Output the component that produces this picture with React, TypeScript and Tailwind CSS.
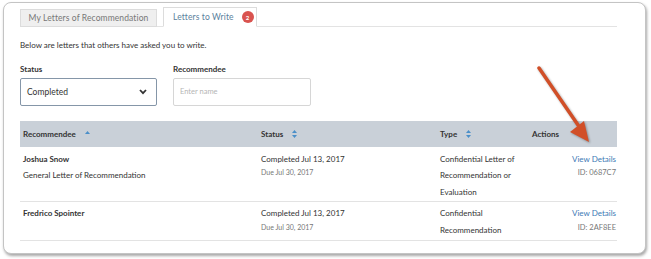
import React from "react";

const font = { fontFamily: "Lato, 'Open Sans', sans-serif" };

function SortBoth() {
  return (
    <svg width="5" height="8" viewBox="0 0 5 8" className="ml-[9px]">
      <polygon points="2.5,0 5,3 0,3" fill="#4a8fc9" />
      <polygon points="2.5,8 5,5 0,5" fill="#4a8fc9" />
    </svg>
  );
}

function SortUp() {
  return (
    <svg width="5" height="4" viewBox="0 0 5 4" className="ml-[9px] mb-[3px]">
      <polygon points="2.5,0 5,3 0,3" fill="#4a8fc9" />
    </svg>
  );
}

export default function App() {
  return (
    <div className="w-[651px] h-[259px] bg-white pt-[2px] pl-[3px] text-[#333]" style={font}>
      <div className="relative w-[643px] h-[252px] rounded-[8px] border border-[#c4c4c4] bg-white shadow-[1px_2px_3px_rgba(0,0,0,0.35)] pl-[16px] pt-[5px]">
        {/* tabs */}
        <div className="flex items-end gap-[6px] w-[597px] h-[19px] border-b border-[#e3e3e3]">
          <div className="h-[18px] w-[137px] -mb-px bg-[#efefef] border border-[#dcdcdc] flex items-center justify-center text-[8.5px] text-[#777] tracking-[0.1px]">
            My Letters of Recommendation
          </div>
          <div className="h-[20px] w-[94px] -mb-px bg-white border border-[#dcdcdc] border-b-white flex items-center pl-[9px] text-[8.5px] text-[#5b7f9d] tracking-[0.1px]">
            Letters to Write
            <span className="ml-[8px] w-[12px] h-[12px] rounded-full bg-[#d9534f] text-white text-[6px] font-bold flex items-center justify-center">
              2
            </span>
          </div>
        </div>

        <p className="mt-[12px] text-[8px] leading-[12px] text-[#333]">
          Below are letters that others have asked you to write.
        </p>

        {/* filters */}
        <div className="mt-[13px] flex gap-[16px]">
          <div className="flex flex-col">
            <span className="text-[8px] font-bold leading-[11px] text-[#333]">Status</span>
            <div className="mt-[3px] w-[137px] h-[28px] border border-[#8596a8] rounded-[2px] flex items-center justify-between pl-[6px] pr-[9px] text-[8.5px] text-[#333]">
              Completed
              <svg width="8" height="6" viewBox="0 0 8 6">
                <path d="M1 1 L4 4.2 L7 1" stroke="#333" strokeWidth="1.8" fill="none" />
              </svg>
            </div>
          </div>
          <div className="flex flex-col">
            <span className="text-[8px] font-bold leading-[11px] text-[#333]">Recommendee</span>
            <div className="mt-[3px] w-[138px] h-[28px] border border-[#d6d6d6] rounded-[2px] flex items-center pl-[6px] text-[7.5px] text-[#b5b5b5]">
              Enter name
            </div>
          </div>
        </div>

        {/* table */}
        <div className="mt-[15px] w-[597px] text-[8px]">
          <div className="grid grid-cols-[238px_179px_92px_1fr] h-[26px] bg-[#c9d0d8] items-center font-bold text-[#333]">
            <div className="pl-[3px] flex items-center">Recommendee<SortUp /></div>
            <div className="pl-[3px] flex items-center">Status<SortBoth /></div>
            <div className="pl-[3px] flex items-center">Type<SortBoth /></div>
            <div className="pl-[3px]">Actions</div>
          </div>

          <div className="grid grid-cols-[238px_179px_92px_1fr] border-b border-[#e3e3e3] pt-[3.5px] pb-[1px] leading-[16.5px]">
            <div className="pl-[3px]">
              <div className="font-bold">Joshua Snow</div>
              <div>General Letter of Recommendation</div>
            </div>
            <div className="pl-[3px]">
              <div>Completed Jul 13, 2017</div>
              <div className="text-[7px] leading-[11px] text-[#777]">Due Jul 30, 2017</div>
            </div>
            <div className="pl-[3px]">
              <div>Confidential Letter of</div>
              <div>Recommendation or</div>
              <div>Evaluation</div>
            </div>
            <div className="pr-[1px] text-right">
              <div className="text-[#3d7ab5]">View Details</div>
              <div className="text-[7.5px] leading-[11px] text-[#777]">ID: 0687C7</div>
            </div>
          </div>

          <div className="grid grid-cols-[238px_179px_92px_1fr] border-b border-[#e3e3e3] pt-[3px] pb-[2px] leading-[16.5px]">
            <div className="pl-[3px]">
              <div className="font-bold">Fredrico Spointer</div>
            </div>
            <div className="pl-[3px]">
              <div>Completed Jul 13, 2017</div>
              <div className="text-[7px] leading-[11px] text-[#777]">Due Jul 30, 2017</div>
            </div>
            <div className="pl-[3px]">
              <div>Confidential</div>
              <div>Recommendation</div>
            </div>
            <div className="pr-[1px] text-right">
              <div className="text-[#3d7ab5]">View Details</div>
              <div className="text-[7.5px] leading-[11px] text-[#777]">ID: 2AF8EE</div>
            </div>
          </div>
        </div>

        {/* annotation arrow */}
        <svg
          className="absolute left-[528px] top-[59px] pointer-events-none"
          width="66"
          height="88"
          viewBox="0 0 66 88"
          style={{ filter: "drop-shadow(1px 1px 1px rgba(0,0,0,0.35))" }}
        >
          <line x1="7" y1="6" x2="46" y2="63" stroke="#d14f28" strokeWidth="3.5" strokeLinecap="round" />
          <polygon points="57,80 38,70 52,59" fill="#d14f28" />
        </svg>
      </div>
    </div>
  );
}
